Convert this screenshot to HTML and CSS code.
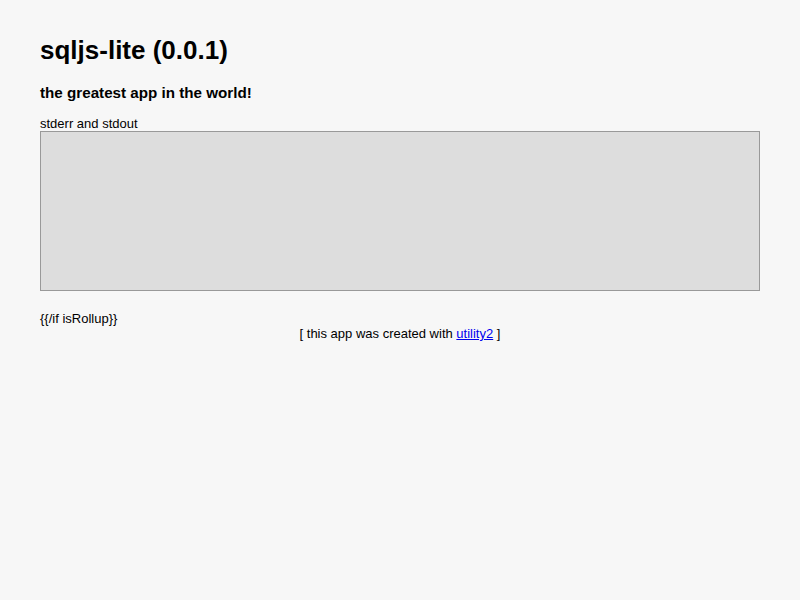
FILE: index.html
```html
<!DOCTYPE html>
<html>
<head>
<meta charset="utf-8">
<title>sqljs-lite (0.0.1)</title>
<link rel="stylesheet" href="styles.css">
</head>
<body>
<div class="page">
<h1 class="title">sqljs-lite (0.0.1)</h1>
<h2 class="subtitle">the greatest app in the world!</h2>
<label class="label" for="outputStdout">stderr and stdout</label>
<textarea class="output" id="outputStdout" readonly></textarea>
<div class="rollup">{{/if isRollup}}</div>
<div class="footer">[ this app was created with <a class="footer-link" href="#">utility2</a> ]</div>
</div>
</body>
</html>
```

FILE: styles.css
```css
html, body {
  margin: 0;
  padding: 0;
  background: #f7f7f7;
}
.page {
  padding: 18px 40px 0;
  font-family: "Liberation Sans", Arial, sans-serif;
  font-size: 13px;
  color: #000;
}
.title {
  font-size: 26px;
  font-weight: bold;
  margin: 17px 0 18px;
}
.subtitle {
  font-size: 15.2px;
  font-weight: bold;
  margin: 13px 0 15px;
}
.label {
  display: block;
  line-height: 15px;
}
.output {
  display: block;
  box-sizing: border-box;
  width: 100%;
  height: 160px;
  margin: 0;
  padding: 2px;
  background: #ddd;
  border: 1px solid #999;
  resize: none;
  font-family: "Liberation Mono", monospace;
  font-size: 13px;
}
.rollup {
  margin-top: 20px;
  line-height: 15px;
}
.footer {
  text-align: center;
  line-height: 15px;
}
.footer-link {
  color: #00e;
}
```
